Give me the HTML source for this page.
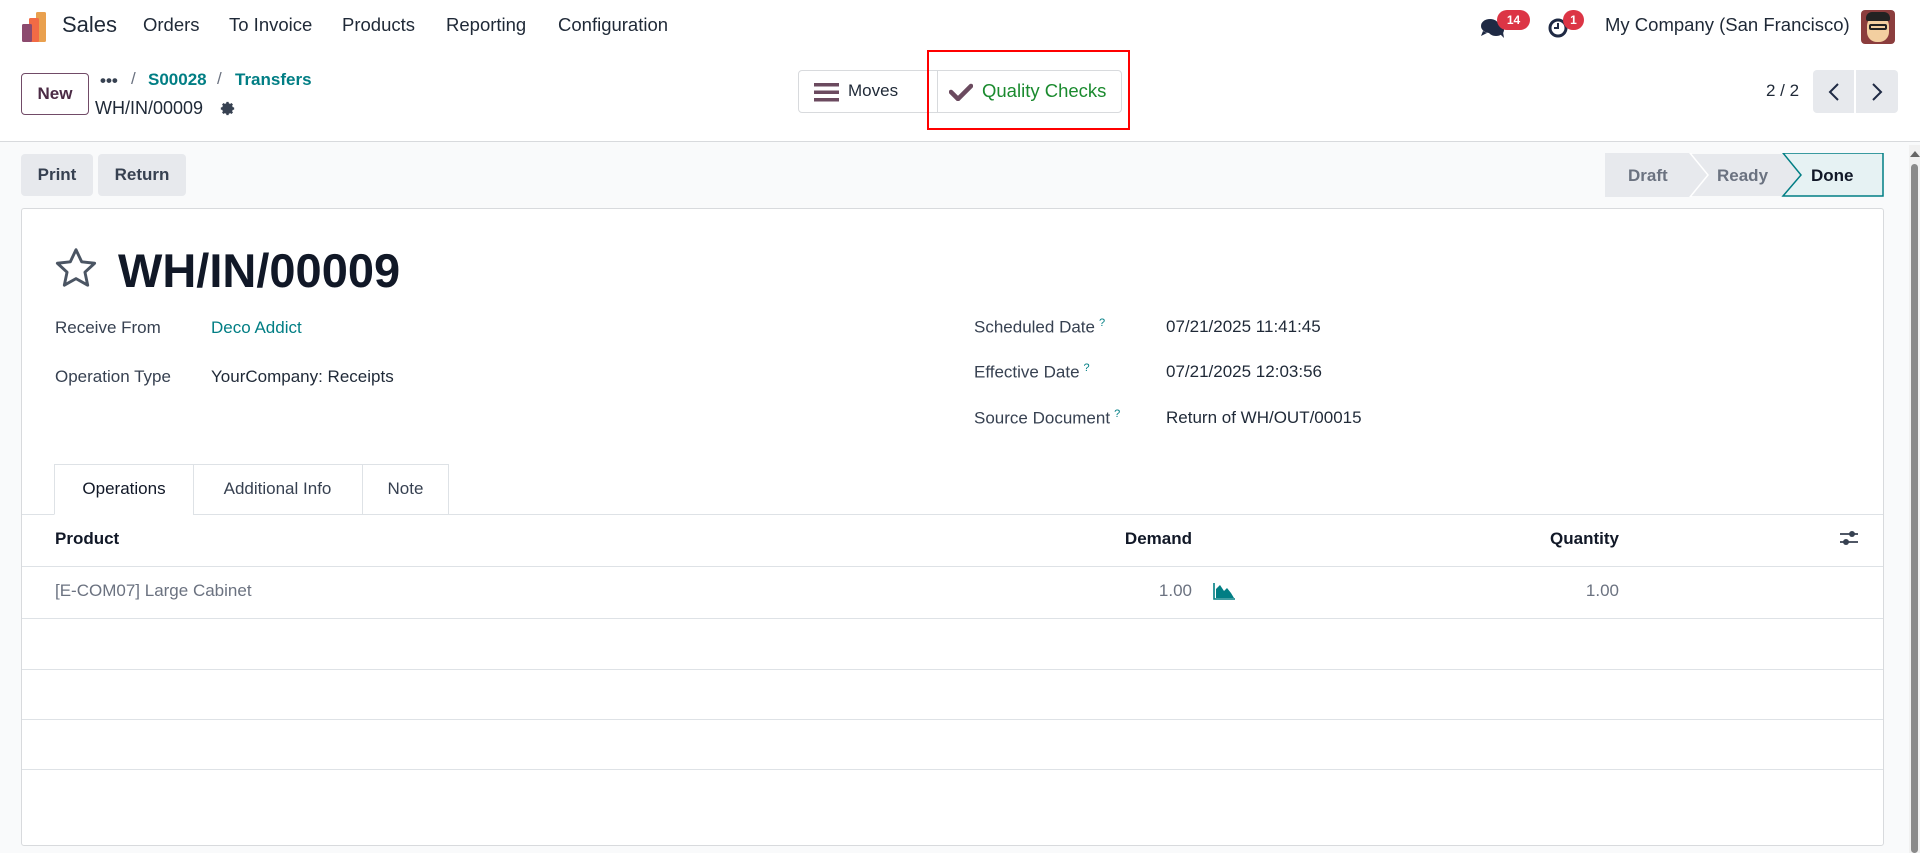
<!DOCTYPE html>
<html><head><meta charset="utf-8"><style>
*{box-sizing:border-box;margin:0;padding:0}
body{width:1920px;height:853px;overflow:hidden;font-family:"Liberation Sans",sans-serif;font-size:17px;color:#374151;background:#f9fafb;position:relative}
.abs{position:absolute}
.nav{position:absolute;left:0;top:0;width:1920px;height:53px;background:#fff}
.nav span{position:absolute;top:14px;font-size:18.5px;color:#1f2937}
.cp{position:absolute;left:0;top:53px;width:1920px;height:89px;background:#fff;border-bottom:1px solid #d8dadd}
.btn{position:absolute;display:flex;align-items:center;justify-content:center;border-radius:4px;font-size:17px}
.lbl{position:absolute;font-size:17px;color:#374151}
.val{position:absolute;font-size:17px;color:#1f2937}
.q{font-size:11px;color:#017e84;vertical-align:super;margin-left:4px}
</style></head><body>
<div class="nav">
 <svg class="abs" style="left:20px;top:12px" width="30" height="30" viewBox="0 0 30 30"><rect x="16" y="0" width="10" height="30" rx="1.5" fill="#e9a04e"/><rect x="9" y="6" width="10" height="24" rx="1.5" fill="#f26b45"/><rect x="2" y="12" width="10" height="18" rx="1.5" fill="#8c4a6e"/></svg>
 <span style="left:62px;top:12px;font-size:22px">Sales</span>
 <span style="left:143px">Orders</span><span style="left:229px">To Invoice</span><span style="left:342px">Products</span><span style="left:446px">Reporting</span><span style="left:558px">Configuration</span>
 <svg class="abs" style="left:1480px;top:17px" width="26" height="22" viewBox="0 0 26 22"><ellipse cx="10" cy="9" rx="9" ry="7" fill="#1f2a44"/><path d="M3 14l-2 5 6-3z" fill="#1f2a44"/><ellipse cx="16" cy="13" rx="8" ry="6" fill="#1f2a44"/><path d="M20 17l4 4-1-6z" fill="#1f2a44"/></svg>
 <div class="abs" style="left:1497px;top:10px;width:33px;height:20px;border-radius:10px;background:#dc3545;color:#fff;font-size:12px;font-weight:bold;text-align:center;line-height:20px">14</div>
 <svg class="abs" style="left:1547px;top:17px" width="22" height="22" viewBox="0 0 22 22"><circle cx="11" cy="11" r="8" fill="none" stroke="#1f2a44" stroke-width="3"/><path d="M11 6v5h-4" stroke="#1f2a44" stroke-width="2" fill="none"/></svg>
 <div class="abs" style="left:1563px;top:10px;width:21px;height:20px;border-radius:10px;background:#dc3545;color:#fff;font-size:12px;font-weight:bold;text-align:center;line-height:20px">1</div>
 <span style="left:1605px;font-size:18.5px">My Company (San Francisco)</span>
 <div class="abs" style="left:1861px;top:10px;width:34px;height:34px;border-radius:4px;background:#8b3d3d;overflow:hidden"><div class="abs" style="left:6px;top:6px;width:22px;height:26px;border-radius:10px;background:#f3cfa0"></div><div class="abs" style="left:5px;top:2px;width:24px;height:9px;background:#222;border-radius:6px 6px 2px 2px"></div><div class="abs" style="left:8px;top:14px;width:18px;height:6px;border:2px solid #222;border-radius:2px"></div></div>
</div>
<div class="cp">
 <div class="btn" style="left:21px;top:20px;width:68px;height:42px;border:1px solid #714b67;color:#4b2b45;background:#fff;font-weight:bold;font-size:17px">New</div>
 <div class="abs" style="left:100px;top:18px;font-size:17px;font-weight:bold;color:#374151">•••</div>
 <div class="abs" style="left:131px;top:16px;font-size:17px;color:#6b7280">/</div>
 <div class="abs" style="left:148px;top:17px;font-size:17px;font-weight:bold;color:#017e84">S00028</div>
 <div class="abs" style="left:217px;top:16px;font-size:17px;color:#6b7280">/</div>
 <div class="abs" style="left:235px;top:17px;font-size:17px;font-weight:bold;color:#017e84">Transfers</div>
 <div class="abs" style="left:95px;top:45px;font-size:18px;color:#1f2937">WH/IN/00009</div>
 <svg class="abs" style="left:219px;top:47px" width="17" height="17" viewBox="0 0 24 24"><path fill="#374151" d="M12 8a4 4 0 100 8 4 4 0 000-8zm9.4 2.5l-2.1-.4a7.6 7.6 0 00-.8-1.9l1.2-1.8-2.1-2.1-1.8 1.2a7.6 7.6 0 00-1.9-.8L13.5 2.6h-3l-.4 2.1a7.6 7.6 0 00-1.9.8L6.4 4.3 4.3 6.4l1.200 1.8a7.6 7.6 0 00-.8 1.9l-2.1.4v3l2.1.4c.2.7.4 1.3.8 1.9l-1.2 1.8 2.1 2.1 1.8-1.2c.6.4 1.2.6 1.9.8l.4 2.1h3l.4-2.1c.7-.2 1.3-.4 1.900-.8l1.8 1.2 2.1-2.1-1.2-1.8c.4-.6.6-1.2.8-1.9l2.1-.4z"/></svg>
 <div class="abs" style="left:798px;top:17px;width:324px;height:43px;border:1px solid #d8dadd;border-radius:4px;background:#fff"></div>
 <div class="abs" style="left:937px;top:17px;width:1px;height:43px;background:#d8dadd"></div>
 <svg class="abs" style="left:814px;top:29px" width="25" height="20" viewBox="0 0 25 20"><rect y="1" width="25" height="3.5" fill="#6b4a5f"/><rect y="8.5" width="25" height="3.5" fill="#6b4a5f"/><rect y="16" width="25" height="3.5" fill="#6b4a5f"/></svg>
 <div class="abs" style="left:848px;top:28px;font-size:17px;color:#1f2937">Moves</div>
 <svg class="abs" style="left:949px;top:30px" width="24" height="18" viewBox="0 0 24 18"><path d="M2 9l7 7L22 3" stroke="#6b4a5f" stroke-width="4.5" fill="none" stroke-linecap="round" stroke-linejoin="round"/></svg>
 <div class="abs" style="left:982px;top:27px;font-size:18.5px;color:#1a8a2e">Quality Checks</div>
 <div class="abs" style="left:927px;top:-3px;width:203px;height:80px;border:2px solid #f00"></div>
 <div class="abs" style="left:1766px;top:28px;font-size:17px;color:#1f2937">2 / 2</div>
 <div class="btn" style="left:1813px;top:17px;width:41px;height:43px;background:#e7e9ed;border-radius:4px 0 0 4px"><svg width="12" height="20" viewBox="0 0 12 20"><path d="M10 2L2 10l8 8" stroke="#1f2a44" stroke-width="2" fill="none"/></svg></div>
 <div class="btn" style="left:1856px;top:17px;width:42px;height:43px;background:#e7e9ed;border-radius:0 4px 4px 0"><svg width="12" height="20" viewBox="0 0 12 20"><path d="M2 2l8 8-8 8" stroke="#1f2a44" stroke-width="2" fill="none"/></svg></div>
</div>
<div class="btn" style="left:21px;top:154px;width:72px;height:42px;background:#e7e9ed;font-weight:bold;color:#374151">Print</div>
<div class="btn" style="left:98px;top:154px;width:88px;height:42px;background:#e7e9ed;font-weight:bold;color:#374151">Return</div>
<svg class="abs" style="left:1605px;top:153px" width="280" height="44" viewBox="0 0 280 44">
 <path d="M0 0H85L103 22 85 44H0z" fill="#e7e9ed"/>
 <path d="M85 0H178L196 22 178 44H85L103 22z" fill="#e7e9ed" stroke="#fff" stroke-width="1.5"/>
 <path d="M178 0H278V43H178L196 22z" fill="#e6f2f3" stroke="#017e84" stroke-width="1.5"/>
 <text x="23" y="28" font-family="Liberation Sans" font-size="17" font-weight="bold" fill="#6b7280">Draft</text>
 <text x="112" y="28" font-family="Liberation Sans" font-size="17" font-weight="bold" fill="#6b7280">Ready</text>
 <text x="206" y="28" font-family="Liberation Sans" font-size="17" font-weight="bold" fill="#111827">Done</text>
</svg>
<div class="abs" style="left:1909px;top:145px;width:11px;height:708px;background:#f1f1f1"></div>
<div class="abs" style="left:1911px;top:164px;width:7px;height:689px;background:#8a8a8a;border-radius:4px"></div>
<div class="abs" style="left:1910px;top:146px;width:0;height:0;border:5px solid transparent;border-bottom:6px solid #666"></div>
<div class="abs" style="left:21px;top:208px;width:1863px;height:638px;background:#fff;border:1px solid #d8dadd;border-radius:3px">
 <svg class="abs" style="left:32px;top:38px" width="44" height="42" viewBox="0 0 24 23"><path d="M12 1.5l3.1 6.6 7.1.8-5.3 4.9 1.5 7.1L12 17.3l-6.4 3.6 1.5-7.1-5.3-4.9 7.1-.8z" fill="none" stroke="#4b5563" stroke-width="1.6" stroke-linejoin="round"/></svg>
 <div class="abs" style="left:96px;top:34px;font-size:47px;font-weight:bold;color:#111827">WH/IN/00009</div>
 <div class="lbl" style="left:33px;top:109px">Receive From</div>
 <div class="val" style="left:189px;top:109px;color:#017e84">Deco Addict</div>
 <div class="lbl" style="left:33px;top:158px">Operation Type</div>
 <div class="val" style="left:189px;top:158px">YourCompany: Receipts</div>
 <div class="lbl" style="left:952px;top:108px">Scheduled Date<span class="q">?</span></div>
 <div class="val" style="left:1144px;top:108px">07/21/2025 11:41:45</div>
 <div class="lbl" style="left:952px;top:153px">Effective Date<span class="q">?</span></div>
 <div class="val" style="left:1144px;top:153px">07/21/2025 12:03:56</div>
 <div class="lbl" style="left:952px;top:199px">Source Document<span class="q">?</span></div>
 <div class="val" style="left:1144px;top:199px">Return of WH/OUT/00015</div>
 <div class="abs" style="left:0;top:305px;width:1861px;height:1px;background:#dee2e6"></div>
 <div class="abs" style="left:32px;top:255px;width:140px;height:51px;border:1px solid #dee2e6;border-bottom:1px solid #fff;background:#fff;text-align:center;line-height:48px;color:#111827">Operations</div>
 <div class="abs" style="left:171px;top:255px;width:170px;height:51px;border:1px solid #dee2e6;border-left:none;text-align:center;line-height:48px">Additional Info</div>
 <div class="abs" style="left:341px;top:255px;width:86px;height:51px;border:1px solid #dee2e6;border-left:none;text-align:center;line-height:48px">Note</div>
 <div class="abs" style="left:33px;top:320px;font-weight:bold;color:#111827">Product</div>
 <div class="abs" style="left:1070px;top:320px;width:100px;text-align:right;font-weight:bold;color:#111827">Demand</div>
 <div class="abs" style="left:1497px;top:320px;width:100px;text-align:right;font-weight:bold;color:#111827">Quantity</div>
 <svg class="abs" style="left:1818px;top:320px" width="18" height="18" viewBox="0 0 18 18"><path d="M0 5h18M0 13h18" stroke="#374151" stroke-width="1.8"/><circle cx="12" cy="5" r="3" fill="#374151"/><circle cx="6" cy="13" r="3" fill="#374151"/></svg>
 <div class="abs" style="left:0;top:357px;width:1861px;height:1px;background:#dee2e6"></div>
 <div class="abs" style="left:33px;top:372px;color:#6b7280">[E-COM07] Large Cabinet</div>
 <div class="abs" style="left:1070px;top:372px;width:100px;text-align:right;color:#6b7280">1.00</div>
 <svg class="abs" style="left:1191px;top:374px" width="22" height="17" viewBox="0 0 22 17"><path d="M1 0v16h21" stroke="#017e84" stroke-width="1.6" fill="none"/><path d="M3 15V6l4-4 4 6 3-3 4 5 3 5z" fill="#017e84"/></svg>
 <div class="abs" style="left:1497px;top:372px;width:100px;text-align:right;color:#6b7280">1.00</div>
 <div class="abs" style="left:0;top:409px;width:1861px;height:1px;background:#dee2e6"></div>
 <div class="abs" style="left:0;top:460px;width:1861px;height:1px;background:#dee2e6"></div>
 <div class="abs" style="left:0;top:510px;width:1861px;height:1px;background:#dee2e6"></div>
 <div class="abs" style="left:0;top:560px;width:1861px;height:1px;background:#dee2e6"></div>
</div>
</body></html>
